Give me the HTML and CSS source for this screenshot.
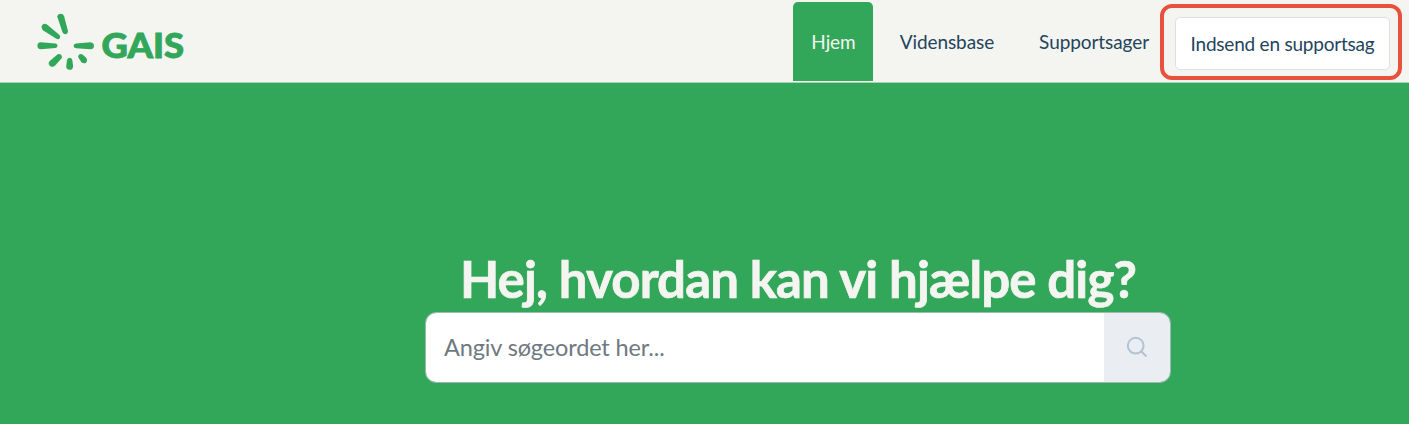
FILE: index.html
```html
<!DOCTYPE html>
<html lang="da">
<head>
  <meta charset="UTF-8">
  <meta name="viewport" content="width=device-width, initial-scale=1.0">
  <title>GAIS Support</title>
  <link rel="stylesheet" href="styles.css">
</head>
<body>
  <header class="header">
    <a class="logo" href="#">
      <svg width="150" height="60" viewBox="0 0 150 60" role="img" aria-label="GAIS">
        <g fill="#32a75a">
          <path d="M20.200 4.500Q20.600 2 23.400 1.800Q26.400 1.800 27.100 4.200L31 19Q31.200 21.600 29 22.200Q26.500 22.600 25.500 20.200Z"/>
          <path d="M4.600 14.500Q5 12.300 7 11.800Q8.700 11.600 10.300 12.800L22.500 23.100Q23.800 24.600 22.800 26.300Q21.300 27.800 19.300 26.800L6.300 18.400Q4.400 16.900 4.600 14.500Z"/>
          <path d="M3.800 30.200L18.600 31.500Q20.500 31.900 20.500 33.800Q20.500 35.600 18.600 36.100L3.800 37.300Q.4 36.800.4 33.700Q.4 30.600 3.800 30.200Z"/>
          <path d="M53.500 30.200Q57 30.700 57 33.800Q57 36.900 53.500 37.300L39 36.200Q36.600 35.900 36.600 33.800Q36.600 31.800 39 31.500Z"/>
          <path d="M20.700 42.300Q22.500 41.400 24.300 42.900Q25.600 44.500 24.400 46.400L18 53.700Q15.600 55.900 13 53.900Q10.500 51.500 12.700 48.900Z"/>
          <path d="M41.900 42.700Q43.600 41.400 45.500 42.500L49.400 46Q51.100 48.300 49.400 50.400Q47 52.100 44.600 50.500L41.600 46.100Q40.500 44.200 41.900 42.700Z"/>
          <path d="M32.600 45.800Q35 46.100 35.400 48.400L36.100 54.400Q35.800 57.700 32.600 57.800Q29.400 57.600 29.200 54.400L29.900 48.400Q30.300 46.100 32.600 45.800Z"/>
        </g>
        <text class="logo-text" x="64.500" y="45.700" textLength="82.500" lengthAdjust="spacingAndGlyphs">GAIS</text>
      </svg>
    </a>
    <nav class="nav">
      <a class="nav-link active" href="#">Hjem</a>
      <a class="nav-link" href="#">Vidensbase</a>
      <a class="nav-link" href="#">Supportsager</a>
    </nav>
    <div class="highlight">
      <a class="submit-btn" href="#">Indsend en supportsag</a>
    </div>
  </header>

  <main class="hero">
    <h1>Hej, hvordan kan vi hjælpe dig?</h1>
    <form class="search">
      <input type="text" placeholder="Angiv søgeordet her...">
      <button type="button" aria-label="Søg">
        <svg width="22" height="22" viewBox="0 0 22 22" fill="none" stroke="#b3c3d0" stroke-width="2">
          <circle cx="9.700" cy="9.700" r="7.900"/>
          <path d="M15.200 15.200L20.500 20.500"/>
        </svg>
      </button>
    </form>
  </main>
</body>
</html>
```

FILE: styles.css
```css
* {
  box-sizing: border-box;
}

body {
  margin: 0;
  font-family: Lato, sans-serif;
  background: #32a75a;
  color: #183247;
}

.header {
  display: flex;
  align-items: flex-start;
  height: 83px;
  padding: 0 7px 0 37px;
  background: #f4f5f0;
  border-bottom: 1px solid #a5d3b3;
}

.logo {
  margin-top: 12px;
  height: 60px;
}

.logo-text {
  font-size: 34px;
  font-weight: 900;
  fill: #32a75a;
  stroke: #32a75a;
  stroke-width: 0.9px;
}

.nav {
  display: flex;
  margin: 2px 11px 0 auto;
  gap: 8px;
}

.nav-link {
  height: 79px;
  padding: 0 18px;
  font-size: 19px;
  letter-spacing: -0.08px;
  line-height: 80px;
  color: #24445c;
  text-decoration: none;
  white-space: nowrap;
}

.nav-link.active {
  margin-right: 2px;
  padding: 0 17px 0 18px;
  background: #32a75a;
  border-radius: 5px 5px 0 0;
  color: #f4f5f0;
}

.nav-link:nth-child(2) {
  margin-left: -1px;
  padding-right: 19px;
}

.nav-link:last-child {
  padding-right: 0;
}

.highlight {
  width: 242px;
  height: 76px;
  margin-top: 4px;
  padding: 9px 8px 0 11px;
  border: 4px solid #e8513d;
  border-radius: 12px;
}

.submit-btn {
  display: block;
  width: 215px;
  height: 53px;
  background: #fff;
  border: 1px solid #dce1e7;
  border-radius: 5px;
  font-size: 19px;
  letter-spacing: -0.22px;
  line-height: 52px;
  text-align: center;
  color: #24445c;
  text-decoration: none;
  white-space: nowrap;
}

.hero {
  width: 746px;
  margin-left: 425px;
  padding-top: 164px;
}

.hero h1 {
  margin: 0;
  font-size: 51px;
  letter-spacing: -0.86px;
  line-height: 63px;
  padding-bottom: 2px;
  text-align: center;
  white-space: nowrap;
  color: #f4f5f0;
  -webkit-text-stroke: 0.7px #f4f5f0;
}

.search {
  display: flex;
  height: 71px;
  border: 1px solid #9eb9b4;
  border-radius: 11px;
  overflow: hidden;
}

.search input {
  flex: 1;
  min-width: 0;
  padding: 0 18px 2px;
  border: none;
  outline: none;
  font-family: inherit;
  font-size: 23.5px;
  letter-spacing: -0.13px;
}

.search input::placeholder {
  color: #6f7980;
}

.search button {
  width: 66px;
  padding: 0 0 2px;
  border: none;
  background: #eaeef3;
}

.search svg {
  display: block;
  margin: 0 auto;
}
```
